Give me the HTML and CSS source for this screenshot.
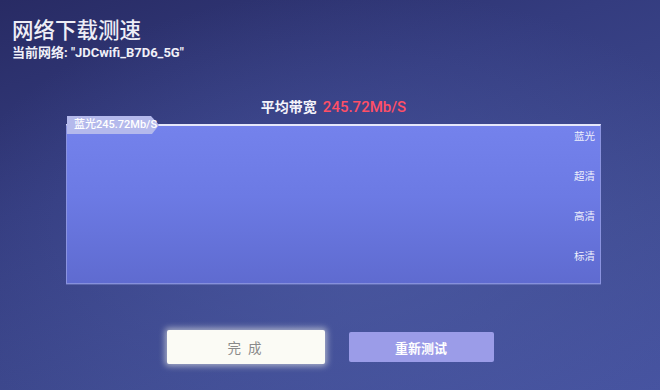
FILE: index.html
```html
<!DOCTYPE html>
<html lang="zh-CN">
<head>
<meta charset="utf-8">
<title>网络下载测速</title>
<link rel="stylesheet" href="styles.css">
</head>
<body>
<div class="screen">
  <header class="header">
    <h1 class="title">网络下载测速</h1>
    <p class="subtitle">当前网络: "JDCwifi_B7D6_5G"</p>
  </header>

  <section class="result">
    <div class="avg"><span class="avg-label">平均带宽</span><span class="avg-value">245.72Mb/S</span></div>
    <div class="chart">
      <div class="tab"><span class="tab-text">蓝光245.72Mb/S</span></div>
      <ul class="levels">
        <li>蓝光</li>
        <li>超清</li>
        <li>高清</li>
        <li>标清</li>
      </ul>
    </div>
  </section>

  <div class="actions">
    <button class="btn btn-done">完 成</button>
    <button class="btn btn-retry">重新测试</button>
  </div>
</div>
</body>
</html>
```

FILE: styles.css
```css
* { box-sizing: border-box; }
html, body { margin: 0; padding: 0; }
body {
  width: 660px;
  height: 390px;
  overflow: hidden;
  font-family: Roboto, "Noto Sans CJK SC", "Noto Sans", sans-serif;
  color: #ffffff;
  background:
    radial-gradient(ellipse 420px 260px at 360px 250px, rgba(80,95,170,0.55), rgba(80,95,170,0) 100%),
    linear-gradient(160deg, #282b64 0%, #343c7f 35%, #3f4b91 70%, #4653a0 100%);
}
.screen {
  width: 660px;
  height: 390px;
  padding: 15px 0 0 0;
  display: flex;
  flex-direction: column;
}
.header { padding-left: 12px; }
.title {
  margin: 0;
  font-family: "Noto Sans CJK SC", sans-serif;
  font-weight: 500;
  font-size: 21.5px;
  line-height: 28px;
  color: #eeeef6;
}
.subtitle {
  margin: 2px 0 0 0;
  font-size: 13px;
  line-height: 16px;
  font-weight: 700;
  color: #f0f0f8;
}
.result {
  margin-top: 35px;
  margin-left: 66px;
  width: 535px;
}
.avg {
  text-align: center;
  font-weight: 700;
  line-height: 20px;
  height: 20px;
}
.avg-label {
  font-family: "Noto Sans CJK SC", sans-serif;
  font-size: 14px;
  color: #f4f4fa;
  margin-right: 6px;
}
.avg-value { color: #ff4f66; font-weight: 500; font-size: 15px; }
.chart {
  position: relative;
  margin-top: 8px;
  height: 160px;
  border-top: 2px solid #e6e8fb;
  border-left: 1px solid #8a93e0;
  border-right: 1px solid #8a93e0;
  border-bottom: 1px solid #8690dc;
  background: linear-gradient(180deg, #7482ec 0%, #6c7ae4 45%, #5f6bd0 100%);
  box-shadow: 0 1px 0 rgba(150,160,230,0.35);
}
.tab {
  position: absolute;
  left: 0;
  top: -10px;
  width: 92px;
  height: 18px;
}
.tab::before {
  content: "";
  position: absolute;
  inset: 0;
  background: #b4b9ec;
  clip-path: polygon(0 0, 84px 0, 92px 9px, 85px 18px, 0 18px);
}
.tab-text {
  position: relative;
  display: block;
  padding-left: 7px;
  font-size: 11px;
  font-weight: 500;
  line-height: 18px;
  color: #ffffff;
  white-space: nowrap;
}
.levels {
  list-style: none;
  margin: 0;
  padding: 3px 5px 0 0;
  display: flex;
  flex-direction: column;
  align-items: flex-end;
  gap: 26px;
}
.levels li {
  font-family: "Noto Sans CJK SC", sans-serif;
  font-size: 10.5px;
  line-height: 14px;
  color: #eef0fc;
}
.actions {
  margin-top: 46px;
  display: flex;
  justify-content: center;
  align-items: center;
  gap: 24px;
}
.btn {
  border: none;
  font-family: "Noto Sans CJK SC", sans-serif;
  border-radius: 2px;
  padding: 0;
}
.btn-done {
  width: 158px;
  height: 34px;
  background: #fbfbf5;
  color: #8a8a8a;
  font-size: 13.5px;
  letter-spacing: 2px;
  box-shadow: 0 0 6px 2px rgba(255,255,240,0.55);
}
.btn-retry {
  width: 145px;
  height: 30px;
  background: #9b9ce8;
  color: #ffffff;
  font-weight: 700;
  font-size: 13px;
}
```
